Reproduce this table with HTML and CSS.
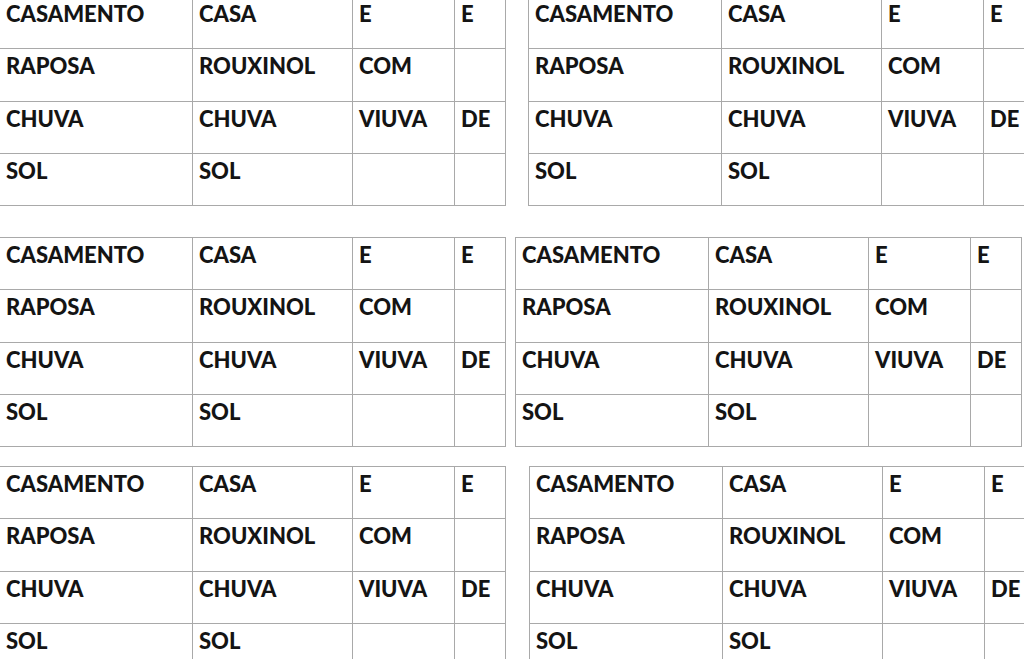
FILE: index.html
```html
<!DOCTYPE html>
<html lang="pt">
<head>
<meta charset="utf-8">
<title>Tabelas</title>
<link rel="stylesheet" href="styles.css">
</head>
<body>
<main class="sheet">
  <section class="band band-1">
    <table class="cards cards-left">
      <colgroup><col class="c1"><col class="c2"><col class="c3"><col class="c4"></colgroup>
      <tr><td>CASAMENTO</td><td>CASA</td><td>E</td><td>E</td></tr>
      <tr><td>RAPOSA</td><td>ROUXINOL</td><td>COM</td><td></td></tr>
      <tr><td>CHUVA</td><td>CHUVA</td><td>VIUVA</td><td>DE</td></tr>
      <tr><td>SOL</td><td>SOL</td><td></td><td></td></tr>
    </table>
    <table class="cards cards-right">
      <colgroup><col class="c1"><col class="c2"><col class="c3"><col class="c4"></colgroup>
      <tr><td>CASAMENTO</td><td>CASA</td><td>E</td><td>E</td></tr>
      <tr><td>RAPOSA</td><td>ROUXINOL</td><td>COM</td><td></td></tr>
      <tr><td>CHUVA</td><td>CHUVA</td><td>VIUVA</td><td>DE</td></tr>
      <tr><td>SOL</td><td>SOL</td><td></td><td></td></tr>
    </table>
  </section>
  <section class="band band-2">
    <table class="cards cards-left">
      <colgroup><col class="c1"><col class="c2"><col class="c3"><col class="c4"></colgroup>
      <tr><td>CASAMENTO</td><td>CASA</td><td>E</td><td>E</td></tr>
      <tr><td>RAPOSA</td><td>ROUXINOL</td><td>COM</td><td></td></tr>
      <tr><td>CHUVA</td><td>CHUVA</td><td>VIUVA</td><td>DE</td></tr>
      <tr><td>SOL</td><td>SOL</td><td></td><td></td></tr>
    </table>
    <table class="cards cards-right">
      <colgroup><col class="c1"><col class="c2"><col class="c3"><col class="c4"></colgroup>
      <tr><td>CASAMENTO</td><td>CASA</td><td>E</td><td>E</td></tr>
      <tr><td>RAPOSA</td><td>ROUXINOL</td><td>COM</td><td></td></tr>
      <tr><td>CHUVA</td><td>CHUVA</td><td>VIUVA</td><td>DE</td></tr>
      <tr><td>SOL</td><td>SOL</td><td></td><td></td></tr>
    </table>
  </section>
  <section class="band band-3">
    <table class="cards cards-left">
      <colgroup><col class="c1"><col class="c2"><col class="c3"><col class="c4"></colgroup>
      <tr><td>CASAMENTO</td><td>CASA</td><td>E</td><td>E</td></tr>
      <tr><td>RAPOSA</td><td>ROUXINOL</td><td>COM</td><td></td></tr>
      <tr><td>CHUVA</td><td>CHUVA</td><td>VIUVA</td><td>DE</td></tr>
      <tr><td>SOL</td><td>SOL</td><td></td><td></td></tr>
    </table>
    <table class="cards cards-right">
      <colgroup><col class="c1"><col class="c2"><col class="c3"><col class="c4"></colgroup>
      <tr><td>CASAMENTO</td><td>CASA</td><td>E</td><td>E</td></tr>
      <tr><td>RAPOSA</td><td>ROUXINOL</td><td>COM</td><td></td></tr>
      <tr><td>CHUVA</td><td>CHUVA</td><td>VIUVA</td><td>DE</td></tr>
      <tr><td>SOL</td><td>SOL</td><td></td><td></td></tr>
    </table>
  </section>
</main>
</body>
</html>
```

FILE: styles.css
```css
html, body {
  margin: 0;
  padding: 0;
  background: #ffffff;
  overflow: hidden;
  width: 1024px;
  height: 659px;
}

.sheet {
  display: flex;
  flex-direction: column;
  margin-top: -4px;
}

.band {
  display: flex;
  align-items: flex-start;
  flex-wrap: nowrap;
}

.band-2 { margin-top: 31px; }
.band-3 { margin-top: 19px; }

.cards {
  border-collapse: collapse;
  table-layout: fixed;
  width: 506px;
  flex: 0 0 506px;
  font-family: Lato, "Open Sans", "Liberation Sans", sans-serif;
  font-weight: 900;
  font-size: 22px;
  line-height: 26px;
  color: #141414;
}

.cards-left { margin-left: -1px; }
.band-1 .cards-right { margin-left: 22px; }
.band-2 .cards-right { margin-left: 9px; }
.band-3 .cards-right { margin-left: 23px; }

.c1 { width: 193px; }
.c2 { width: 160px; }
.c3 { width: 102px; }
.c4 { width: 51px; }

.cards tr { height: 52px; }
.cards tr:nth-child(2) { height: 53px; }

.cards td {
  border: 1px solid #a9a9a9;
  padding: 4px 0 0 6px;
  vertical-align: top;
  white-space: nowrap;
  overflow: hidden;
}
```
